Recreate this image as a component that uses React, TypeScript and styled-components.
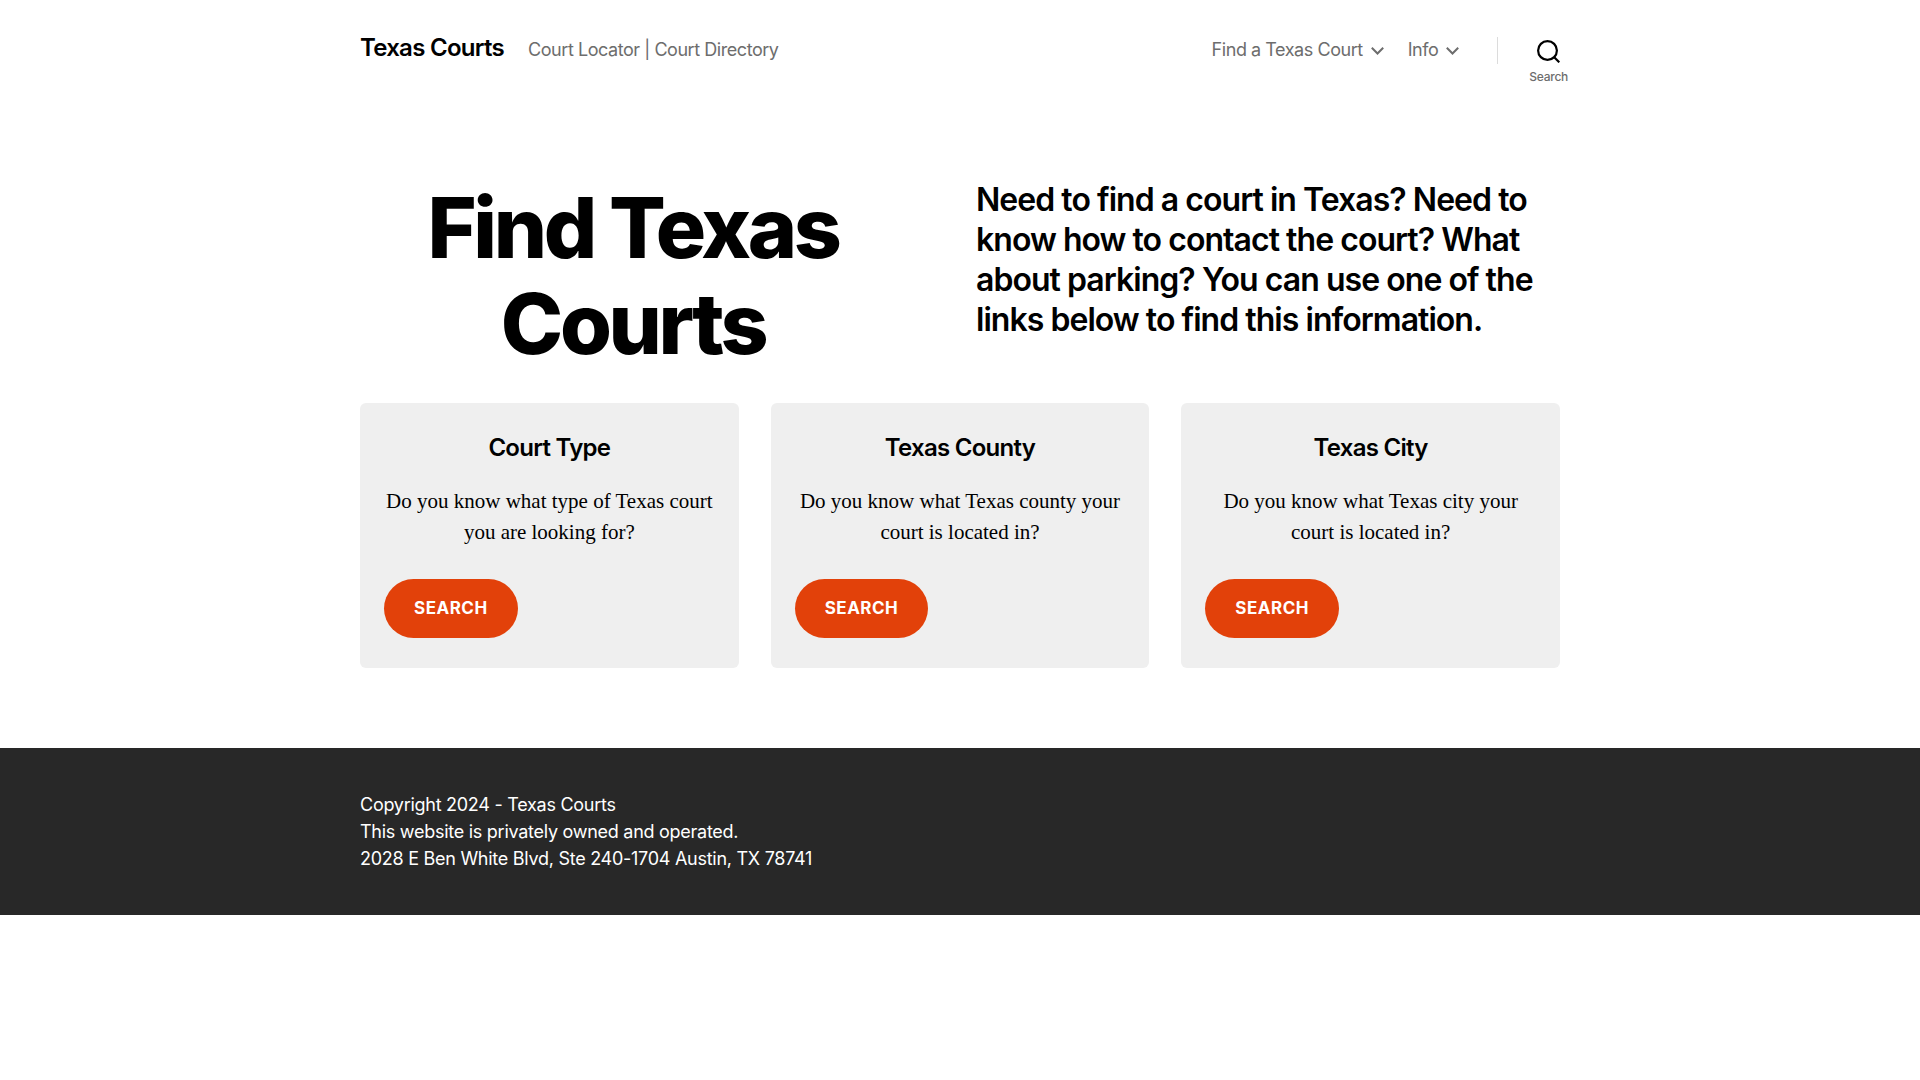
import React from "react";
import styled, { createGlobalStyle } from "styled-components";

const sans = `Inter, "Liberation Sans", sans-serif`;
const serif = `"Liberation Serif", "Times New Roman", serif`;
const accent = "#e2410a";
const muted = "#6d6d6d";

const tracking = {
  body: "-0.015em",
  nav: "-0.025em",
  heading: "-0.03em",
  display: "-0.04em",
  caps: "0.03em",
};

const GlobalStyle = createGlobalStyle`
  *, *::before, *::after { box-sizing: border-box; }
  body {
    margin: 0;
    background: #fff;
    color: #000;
    font-family: ${sans};
    font-size: 18px;
    letter-spacing: ${tracking.body};
  }
  h1, h2, h3, p { margin: 0; }
  a { color: inherit; text-decoration: none; }
  button { border: 0; background: none; padding: 0; font: inherit; letter-spacing: inherit; color: inherit; cursor: pointer; }
`;

const Container = styled.div`
  max-width: 1200px;
  margin: 0 auto;
`;

const HeaderInner = styled(Container)`
  display: flex;
  justify-content: space-between;
  align-items: flex-start;
  padding: 32px 0;
`;

const Branding = styled.div`
  display: flex;
  align-items: baseline;
  gap: 24px;
`;

const SiteTitle = styled.a`
  font-size: 24px;
  line-height: 32px;
  font-weight: 600;
  letter-spacing: ${tracking.heading};
`;

const Tagline = styled.p`
  color: ${muted};
  line-height: 32px;
  letter-spacing: ${tracking.nav};
`;

const HeaderNav = styled.div`
  display: flex;
  align-items: flex-start;
  margin-right: -8px;
`;

const Menu = styled.nav`
  display: flex;
  gap: 24px;
  padding-right: 38px;
`;

const MenuLink = styled.a`
  display: flex;
  align-items: center;
  gap: 8px;
  color: ${muted};
  line-height: 36px;
  letter-spacing: ${tracking.nav};
`;

const SearchToggle = styled.button`
  display: flex;
  flex-direction: column;
  align-items: center;
  gap: 6px;
  color: ${muted};
  font-size: 12px;
  line-height: 16px;
  font-weight: 500;
  padding-top: 8px;

  svg { color: #000; }
`;

const Divider = styled.span`
  width: 1px;
  height: 27px;
  margin: 5px 31px 0 0;
  background: #dcdcdc;
`;

const Intro = styled(Container)`
  display: grid;
  grid-template-columns: 1fr 1fr;
  gap: 32px;
  padding-top: 43px;
`;

const PageTitle = styled.h1`
  padding: 20px 38px 0 0;
  font-size: 84px;
  line-height: 96px;
  font-weight: 800;
  letter-spacing: ${tracking.display};
  text-align: center;
`;

const Lead = styled.h2`
  padding-top: 20px;
  font-size: 32px;
  line-height: 40px;
  font-weight: 600;
  letter-spacing: ${tracking.heading};
`;

const Cards = styled(Container)`
  display: grid;
  grid-template-columns: repeat(3, 1fr);
  gap: 32px;
  padding: 31px 0 80px;
`;

const Card = styled.section`
  display: flex;
  flex-direction: column;
  align-items: flex-start;
  padding: 30px 24px;
  border-radius: 6px;
  background: #efefef;
`;

const CardTitle = styled.h3`
  align-self: stretch;
  font-size: 24px;
  line-height: 30px;
  font-weight: 600;
  letter-spacing: ${tracking.heading};
  text-align: center;
`;

const CardText = styled.p`
  align-self: stretch;
  margin: 23px 0 31px;
  font-family: ${serif};
  font-size: 21px;
  line-height: 31px;
  letter-spacing: normal;
  text-align: center;
`;

const SearchLink = styled.a`
  padding: 20px 30px;
  border-radius: 30px;
  background: ${accent};
  color: #fff;
  font-size: 17px;
  line-height: 19px;
  font-weight: 700;
  letter-spacing: ${tracking.caps};
  text-transform: uppercase;
`;

const Footer = styled.footer`
  padding: 43px 0;
  background: #282828;
  color: #fff;
  line-height: 27px;
`;

const ChevronDown = () => (
  <svg width="13" height="9" viewBox="0 0 13 9" fill="none" stroke="currentColor" strokeWidth="2" aria-hidden="true">
    <path d="M.8 1.8 6.5 7.5 12.2 1.8" />
  </svg>
);

const SearchIcon = () => (
  <svg width="23" height="23" viewBox="0 0 23 23" fill="none" stroke="currentColor" strokeWidth="2.2" aria-hidden="true">
    <circle cx="10.5" cy="10.5" r="9.4" />
    <path d="m17 17 5.3 5.3" />
  </svg>
);

const cards = [
  { title: "Court Type", text: "Do you know what type of Texas court you are looking for?" },
  { title: "Texas County", text: "Do you know what Texas county your court is located in?" },
  { title: "Texas City", text: "Do you know what Texas city your court is located in?" },
];

export default function App() {
  return (
    <>
      <GlobalStyle />
      <header>
        <HeaderInner>
          <Branding>
            <SiteTitle href="#">Texas Courts</SiteTitle>
            <Tagline>Court Locator | Court Directory</Tagline>
          </Branding>
          <HeaderNav>
            <Menu aria-label="Main">
              <MenuLink href="#">Find a Texas Court <ChevronDown /></MenuLink>
              <MenuLink href="#">Info <ChevronDown /></MenuLink>
            </Menu>
            <Divider />
            <SearchToggle type="button">
              <SearchIcon />
              Search
            </SearchToggle>
          </HeaderNav>
        </HeaderInner>
      </header>
      <main>
        <Intro>
          <PageTitle>Find Texas Courts</PageTitle>
          <Lead>
            Need to find a court in Texas? Need to know how to contact the court? What about
            parking? You can use one of the links below to find this information.
          </Lead>
        </Intro>
        <Cards>
          {cards.map((card) => (
            <Card key={card.title}>
              <CardTitle>{card.title}</CardTitle>
              <CardText>{card.text}</CardText>
              <SearchLink href="#">Search</SearchLink>
            </Card>
          ))}
        </Cards>
      </main>
      <Footer>
        <Container>
          <p>Copyright 2024 - Texas Courts</p>
          <p>This website is privately owned and operated.</p>
          <p>2028 E Ben White Blvd, Ste 240-1704 Austin, TX 78741</p>
        </Container>
      </Footer>
    </>
  );
}
